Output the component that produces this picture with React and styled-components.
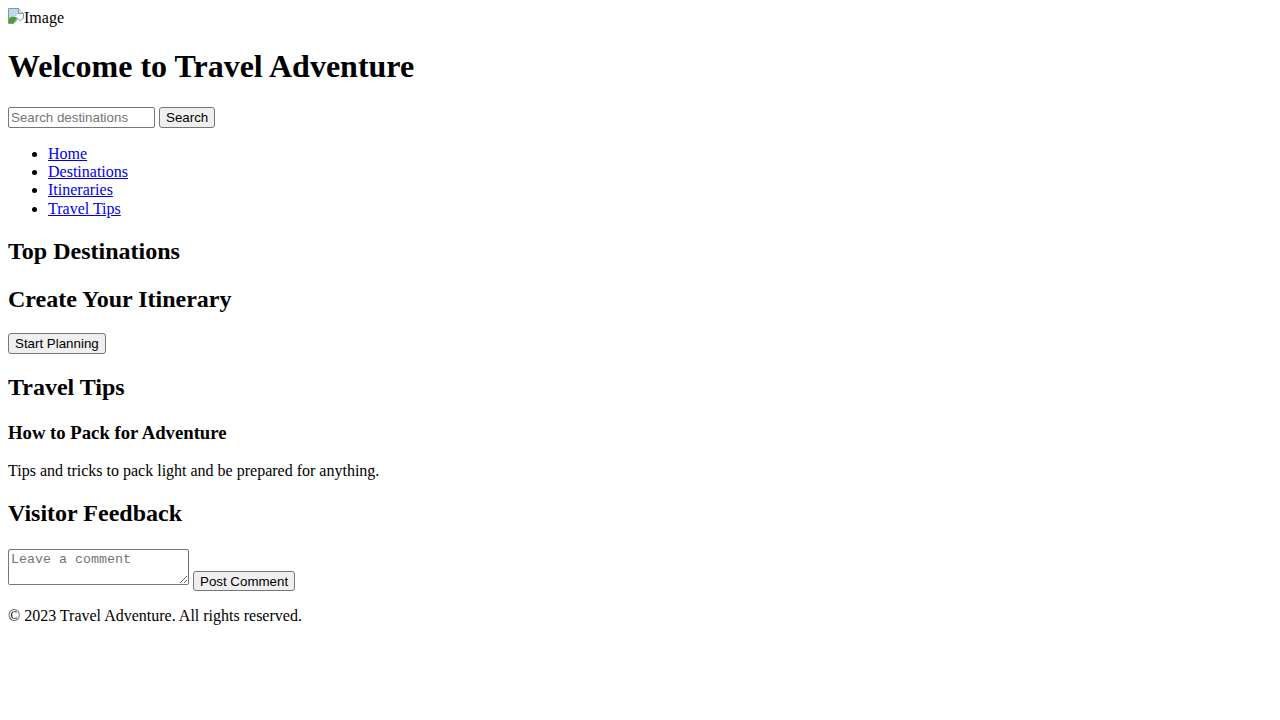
import React from 'react';
import styled, { createGlobalStyle } from 'styled-components';

const GlobalStyle = createGlobalStyle`
  body {
    margin: 8px;
    font-family: "Liberation Serif", "Times New Roman", serif;
    font-size: 16px;
    line-height: 1.15;
    color: black;
    background: white;
  }
`;

const Banner = styled.div`
  height: 19px;
  line-height: 19px;
  white-space: nowrap;
`;

const BrokenIcon = styled.svg`
  display: inline-block;
  width: 16px;
  height: 16px;
  vertical-align: top;
`;

const Title = styled.h1`
  font-size: 32px;
  font-weight: bold;
  margin: 21.44px 0;
`;

const SearchForm = styled.form`
  margin: 0;
  padding-bottom: 1px;
`;

const TextInput = styled.input`
  font-family: "Liberation Sans", Arial, sans-serif;
  font-size: 13.333px;
  width: 147px;
  height: 21px;
  box-sizing: border-box;
  padding: 1px 2px;
  margin: 0 4px 0 0;
  border: 1px solid #767676;
  border-radius: 2px;
  &::placeholder {
    color: #757575;
  }
`;

const Button = styled.button`
  font-family: "Liberation Sans", Arial, sans-serif;
  font-size: 13.333px;
  padding: 1px 6px;
  height: ${(p) => (p.$short ? '20px' : '21px')};
  box-sizing: border-box;
  margin: 0;
  background: #efefef;
  border: 1px solid #767676;
  border-radius: 3px;
  color: black;
`;

const NavList = styled.ul`
  margin: 16px 0;
  padding-left: 40px;
  list-style: disc;
`;

const NavLink = styled.a`
  color: #0000ee;
  text-decoration: underline;
`;

const SectionTitle = styled.h2`
  font-size: 24px;
  font-weight: bold;
  margin: 19.92px 0;
`;

const CardTitle = styled.h3`
  font-size: 18.72px;
  font-weight: bold;
  margin: 18.72px 0;
`;

const Text = styled.p`
  margin: 16px 0;
`;

const CommentForm = styled.form`
  margin: 0;
`;

const CommentBox = styled.textarea`
  font-family: "Liberation Mono", "Courier New", monospace;
  font-size: 13.333px;
  line-height: normal;
  width: 181px;
  height: 36px;
  box-sizing: border-box;
  padding: 2px;
  border: 1px solid #767676;
  border-radius: 2px;
  margin: 1px 4px 1px 0;
  &::placeholder {
    color: #757575;
  }
`;

const App = () => {
  const links = ['Home', 'Destinations', 'Itineraries', 'Travel Tips'];
  return (
    <>
      <GlobalStyle />
      <header>
        <Banner>
          <BrokenIcon viewBox="0 0 16 16">
            <path d="M0.5 0.5 H10.5 L15.5 5.5 V10 L12.5 13 L10 10.5 L5.5 15.5 H0.5 Z" fill="#f7f9fc" stroke="#8b939c" />
            <path d="M1 1 H10 V6 L6 10 Q3 8.5 1 9.5 Z" fill="#bcd8f0" />
            <path d="M1 15 V10 Q4.5 7.5 9.5 10 L5.5 15 Z" fill="#4f9d2d" />
            <path d="M10.5 0.5 V5.5 H15.5" fill="#dfe4ea" stroke="#8b939c" />
          </BrokenIcon>
          Image
        </Banner>
        <Title>Welcome to Travel Adventure</Title>
        <SearchForm onSubmit={(e) => e.preventDefault()}>
          <TextInput type="text" placeholder="Search destinations" />
          <Button type="submit">Search</Button>
        </SearchForm>
        <nav>
          <NavList>
            {links.map((link) => (
              <li key={link}>
                <NavLink href="#">{link}</NavLink>
              </li>
            ))}
          </NavList>
        </nav>
      </header>
      <main>
        <section>
          <SectionTitle>Top Destinations</SectionTitle>
        </section>
        <section>
          <SectionTitle>Create Your Itinerary</SectionTitle>
          <Button>Start Planning</Button>
        </section>
        <section>
          <SectionTitle>Travel Tips</SectionTitle>
          <article>
            <CardTitle>How to Pack for Adventure</CardTitle>
            <Text>Tips and tricks to pack light and be prepared for anything.</Text>
          </article>
        </section>
        <section>
          <SectionTitle>Visitor Feedback</SectionTitle>
          <CommentForm onSubmit={(e) => e.preventDefault()}>
            <CommentBox placeholder="Leave a comment" />
            <Button type="submit" $short>Post Comment</Button>
          </CommentForm>
        </section>
      </main>
      <footer>
        <Text>© 2023 Travel Adventure. All rights reserved.</Text>
      </footer>
    </>
  );
};

export default App;
